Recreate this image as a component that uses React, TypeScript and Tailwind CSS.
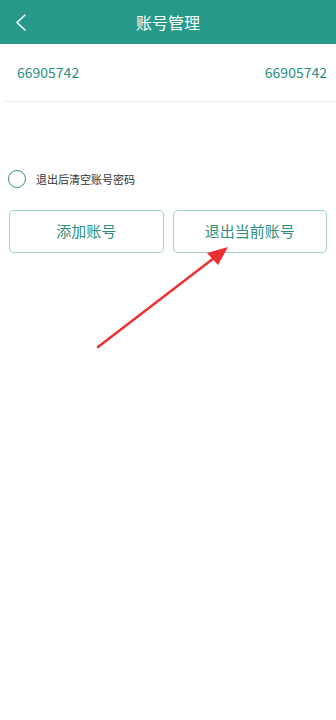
import React from "react";

export default function App() {
  const font = { fontFamily: '"Noto Sans CJK SC", "Noto Sans", sans-serif' };
  return (
    <div className="w-[336px] h-[720px] bg-white relative overflow-hidden" style={font}>
      <div className="h-[44px] bg-[#26998a] flex items-center relative">
        <svg className="absolute left-[13px] top-[12px]" width="16" height="20" viewBox="0 0 16 20">
          <path d="M12 3 L4 10.5 L12 18" stroke="white" strokeWidth="1.5" fill="none" strokeLinecap="round" strokeLinejoin="round" />
        </svg>
        <div className="w-full text-center text-white text-[16px] leading-none">账号管理</div>
      </div>
      <div className="h-[57px] flex items-center justify-between pl-[17px] pr-[9px] text-[#2c8f7e] text-[14px]">
        <span>66905742</span>
        <span>66905742</span>
      </div>
      <div className="ml-[4px] h-[1px] bg-[#eeedf3]" />
      <div className="mt-[68px] flex items-center pl-[8px] gap-[10px]">
        <div className="w-[18px] h-[18px] rounded-full border-[1.5px] border-[#3a8e80]" />
        <span className="text-[11px] text-[#333]">退出后清空账号密码</span>
      </div>
      <div className="mt-[22px] flex px-[9px] gap-[9px]">
        <div className="flex-1 h-[43px] rounded-[5px] border border-[#9fd3c9] flex items-center justify-center text-[#2c8f7e] text-[15px]">添加账号</div>
        <div className="flex-1 h-[43px] rounded-[5px] border border-[#9fd3c9] flex items-center justify-center text-[#2c8f7e] text-[15px]">退出当前账号</div>
      </div>
      <svg className="absolute left-0 top-0 pointer-events-none" width="336" height="720">
        <path d="M98 347 L214 258" stroke="#ee3030" strokeWidth="2.5" strokeLinecap="round" />
        <polygon points="228,247 207,253 218,265" fill="#ee3030" />
      </svg>
    </div>
  );
}
